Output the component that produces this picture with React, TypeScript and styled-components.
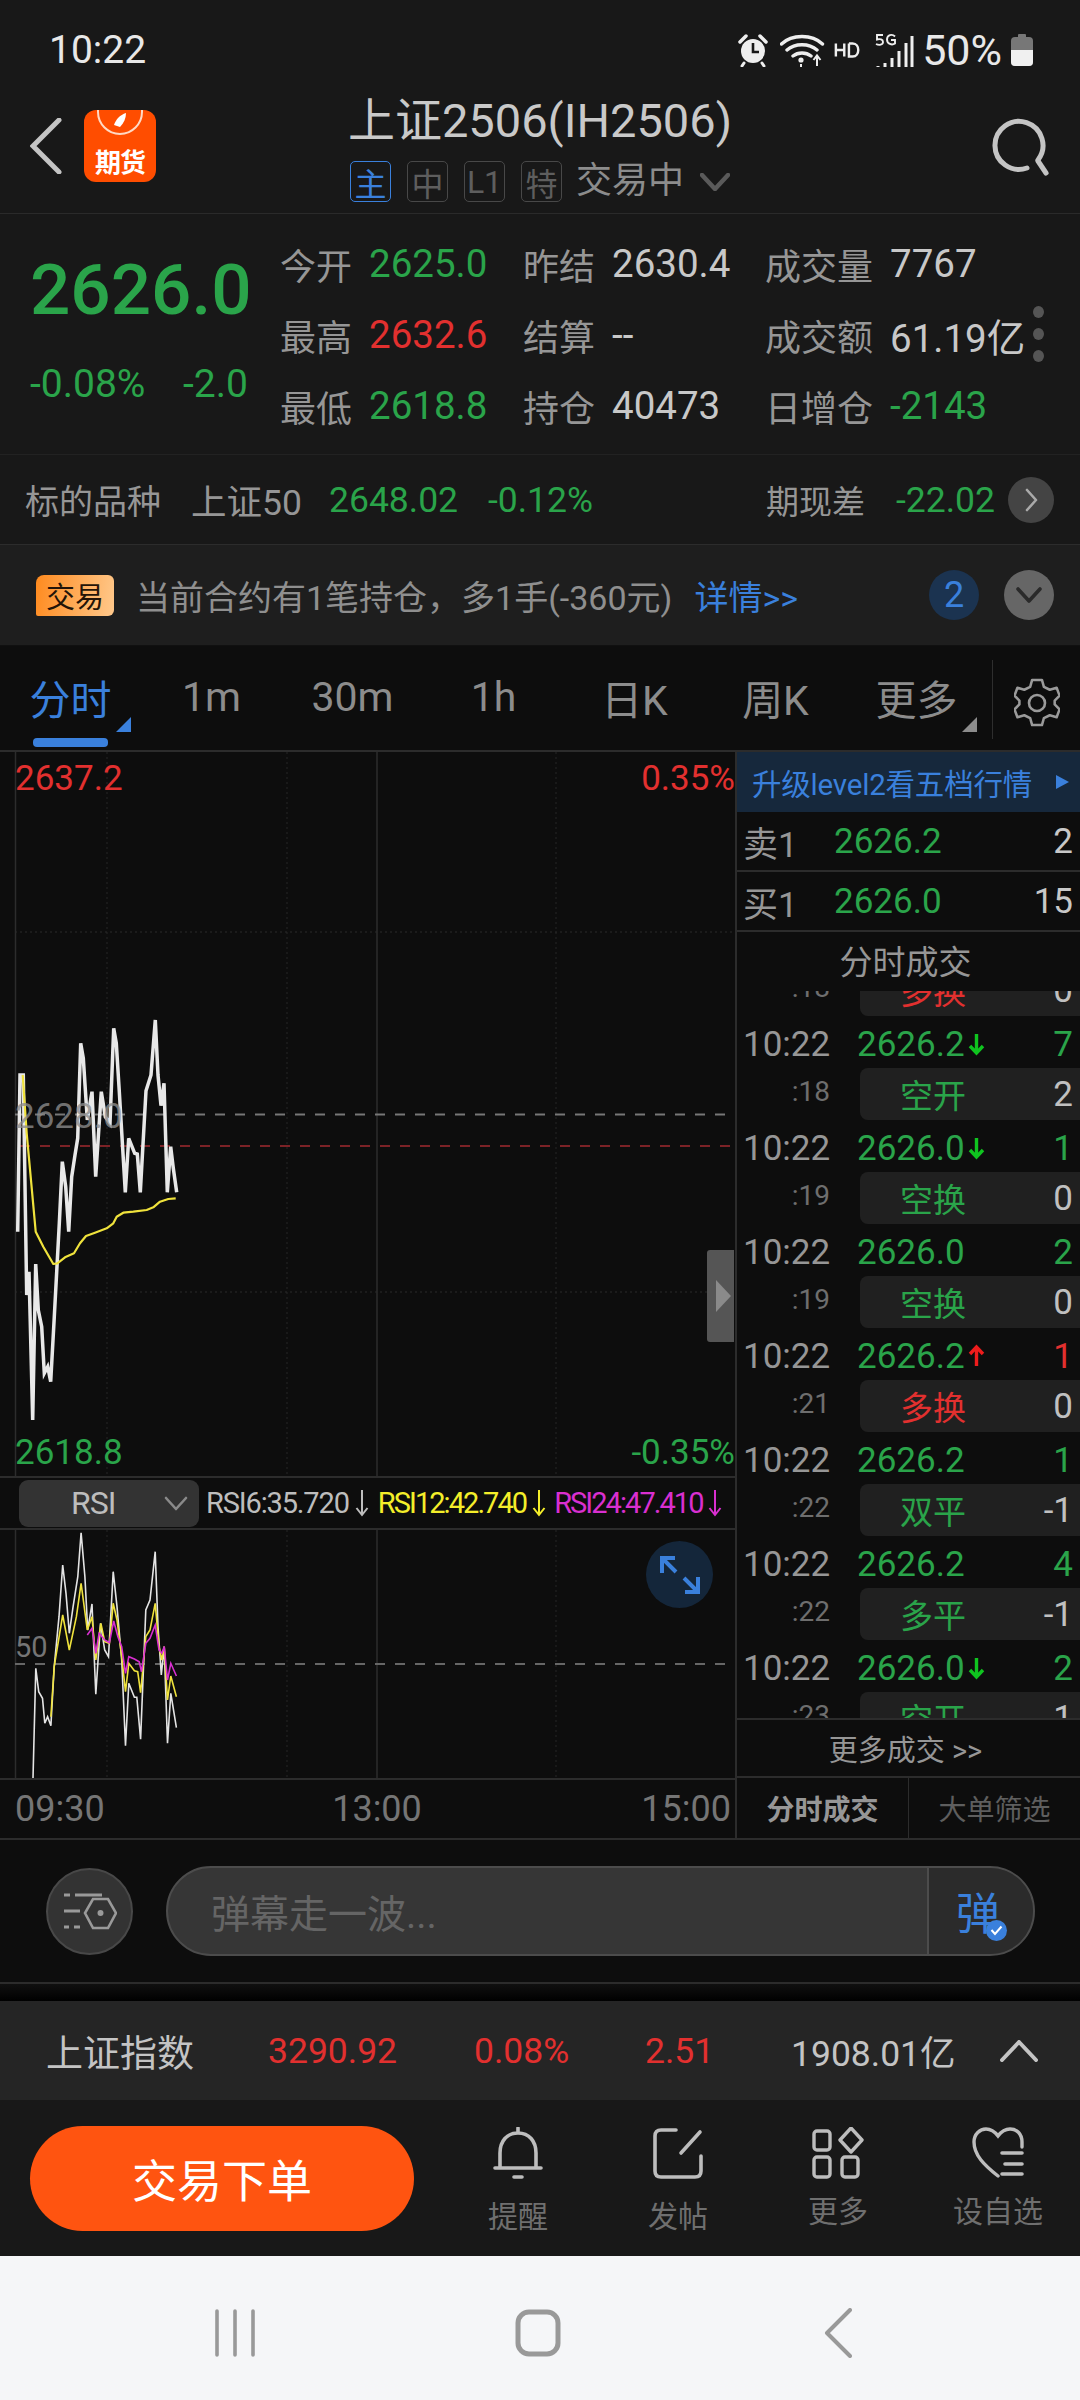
import React from 'react';
import styled, { createGlobalStyle } from 'styled-components';

const GREEN = '#2aa44a';
const RED = '#e2302f';
const BLUE = '#3a80dc';

const GlobalStyle = createGlobalStyle`
  html, body { margin: 0; padding: 0; background: #0d0d0d; }
  * { box-sizing: border-box; }
  body { font-family: Roboto, "Noto Sans CJK SC", sans-serif; }
`;

const Page = styled.div`
  width: 1080px;
  height: 2400px;
  display: flex;
  flex-direction: column;
  overflow: hidden;
  background: #0d0d0d;
  color: #c8c8c8;
`;

const StatusBar = styled.div`
  height: 85px;
  flex: none;
  display: flex;
  align-items: center;
  padding: 24px 47px 9px 49px;
  background: #181818;
  color: #e8e8e8;
`;

const Clock = styled.div`
  font-size: 39px;
  margin-right: auto;
`;

const StatusIcons = styled.div`
  display: flex;
  align-items: center;
`;

const BatteryText = styled.span`
  font-size: 43px;
  margin: 0 9px 0 8px;
`;

const Header = styled.div`
  height: 129px;
  flex: none;
  display: grid;
  grid-template-columns: 1fr auto 1fr;
  background: #181818;
  border-bottom: 1px solid #2a2a2a;
`;

const HeaderLeft = styled.div`
  display: flex;
  align-items: center;
  gap: 22px;
  padding: 0 0 6px 30px;
`;

const Logo = styled.div`
  position: relative;
  width: 72px;
  height: 72px;
  border-radius: 12px;
  background: #ff4d00;
  overflow: hidden;
  display: flex;
  align-items: flex-end;
  justify-content: center;
  color: #fff;
  font-size: 26px;
  font-weight: 700;
  line-height: 38px;
  letter-spacing: -1px;
`;

const LogoMark = styled.svg`
  position: absolute;
  top: 0;
  left: 12px;
`;

const HeaderCenter = styled.div`
  display: flex;
  flex-direction: column;
  align-items: center;
`;

const Title = styled.div`
  font-size: 47px;
  line-height: 56px;
  margin-top: 8px;
  color: #c9c9c9;
`;

const TagRow = styled.div`
  display: flex;
  align-items: center;
  gap: 16px;
  margin-top: 12px;
`;

const Tag = styled.span<{ $active?: boolean }>`
  width: 41px;
  height: 41px;
  display: flex;
  align-items: center;
  justify-content: center;
  border: 1.5px solid ${(p) => (p.$active ? BLUE : '#484848')};
  border-radius: 5px;
  font-size: 32px;
  color: ${(p) => (p.$active ? BLUE : '#5e5e5e')};
`;

const TradeState = styled.span`
  font-size: 36px;
  color: #8c8c8c;
  margin-left: -2px;
  line-height: 41px;
`;

const HeaderRight = styled.div`
  display: flex;
  align-items: center;
  justify-content: flex-end;
  padding: 0 29px 4px 0;
`;

const Quote = styled.div`
  position: relative;
  height: 241px;
  flex: none;
  display: flex;
  background: #181818;
  border-bottom: 1px solid #222;
  padding-top: 14px;
`;

const PriceCol = styled.div`
  width: 280px;
  flex: none;
  padding-left: 30px;
`;

const BigPrice = styled.div`
  font-size: 71px;
  font-weight: 500;
  line-height: 84px;
  margin-top: 20px;
  color: ${GREEN};
`;

const ChangeRow = styled.div`
  width: 218px;
  display: flex;
  justify-content: space-between;
  font-size: 39px;
  line-height: 44px;
  margin-top: 30px;
  color: ${GREEN};
`;

const QuoteGrid = styled.div`
  display: grid;
  grid-template-columns: 243px 242px 1fr;
  grid-auto-rows: 71px;
  flex: 1;
`;

const QuoteCell = styled.div`
  display: flex;
  align-items: center;
  gap: 17px;
`;

const QuoteLabel = styled.span`
  font-size: 36px;
  color: #969696;
`;

const QuoteValue = styled.span<{ $color?: string }>`
  font-size: 38.5px;
  color: ${(p) => p.$color || '#c8c8c8'};
  white-space: nowrap;
`;

const Dots = styled.div`
  position: absolute;
  top: 92px;
  left: 1033px;
  display: flex;
  flex-direction: column;
  gap: 10px;
`;

const Dot = styled.span`
  width: 11px;
  height: 12px;
  border-radius: 50%;
  background: #555;
`;

const Underlying = styled.div`
  height: 90px;
  flex: none;
  display: flex;
  align-items: center;
  background: #181818;
  border-bottom: 1px solid #2c2c2c;
  padding: 0 26px 0 25px;
`;

const UnderlyingText = styled.span<{ $color?: string; $w?: number; $size?: number }>`
  font-size: ${(p) => p.$size || 35.5}px;
  width: ${(p) => (p.$w ? `${p.$w}px` : 'auto')};
  flex: none;
  white-space: nowrap;
  color: ${(p) => p.$color || '#969696'};
`;

const RoundButton = styled.span<{ $bg: string; $size?: number }>`
  width: ${(p) => p.$size || 46}px;
  height: ${(p) => p.$size || 46}px;
  flex: none;
  border-radius: 50%;
  display: flex;
  align-items: center;
  justify-content: center;
  background: ${(p) => p.$bg};
`;

const TradeBar = styled.div`
  height: 101px;
  flex: none;
  display: flex;
  align-items: center;
  background: #1e1e1e;
  border-bottom: 1px solid #101010;
  padding: 0 26px 0 36px;
`;

const TradeBadge = styled.span`
  width: 78px;
  height: 41px;
  flex: none;
  display: flex;
  align-items: center;
  justify-content: center;
  border-radius: 8px 6px 6px 2px;
  background: linear-gradient(100deg, #ff8a1e, #ffc98c);
  color: #241408;
  font-size: 29px;
`;

const TradeText = styled.span`
  font-size: 34px;
  color: #8f8f8f;
  margin-left: 22px;
  white-space: nowrap;
`;

const TradeLink = styled.span`
  font-size: 34px;
  color: ${BLUE};
  margin-left: 22px;
  margin-right: auto;
`;

const CountCircle = styled(RoundButton)`
  color: ${BLUE};
  font-size: 36px;
  margin-right: 25px;
`;

const TabBar = styled.div`
  height: 106px;
  flex: none;
  display: flex;
  background: #0d0d0d;
  border-bottom: 2px solid #2c2c2c;
`;

const Tab = styled.div<{ $active?: boolean }>`
  position: relative;
  width: 141px;
  display: flex;
  align-items: center;
  justify-content: center;
  font-size: 41px;
  padding-bottom: 2px;
  color: ${(p) => (p.$active ? BLUE : '#8c8c8c')};
`;

const TabUnderline = styled.span`
  position: absolute;
  left: 33px;
  bottom: 3px;
  width: 75px;
  height: 9px;
  border-radius: 4px;
  background: ${BLUE};
`;

const TabCorner = styled.span<{ $color: string }>`
  position: absolute;
  right: 10px;
  top: 71px;
  width: 0;
  height: 0;
  border-left: 15px solid transparent;
  border-bottom: 15px solid ${(p) => p.$color};
`;

const GearCell = styled.div`
  flex: 1;
  display: flex;
  align-items: center;
  justify-content: flex-end;
  margin: 14px 0 11px 5px;
  padding: 6px 20px 0 0;
  border-left: 1px solid #2e2e2e;
`;

const Body = styled.div`
  height: 1088px;
  flex: none;
  display: flex;
  border-bottom: 2px solid #2c2c2c;
`;

const LeftPanel = styled.div`
  width: 735px;
  flex: none;
  display: flex;
  flex-direction: column;
`;

const ChartBox = styled.div<{ $h: number }>`
  position: relative;
  height: ${(p) => p.$h}px;
  flex: none;
`;

const ChartSvg = styled.svg`
  position: absolute;
  inset: 0;
  display: block;
`;

const ChartLabel = styled.span<{ $color: string; $top: number; $right?: boolean; $size?: number }>`
  position: absolute;
  top: ${(p) => p.$top}px;
  ${(p) => (p.$right ? 'right: 0;' : 'left: 15px;')}
  font-size: ${(p) => p.$size || 35}px;
  line-height: 40px;
  color: ${(p) => p.$color};
`;

const ChartHandle = styled.span`
  position: absolute;
  left: 707px;
  top: 498px;
  width: 27px;
  height: 92px;
  border-radius: 3px 0 0 3px;
  background: #555;
  display: flex;
  align-items: center;
  justify-content: flex-end;
  padding-right: 3px;
`;

const HandleArrow = styled.span`
  width: 0;
  height: 0;
  border-top: 16px solid transparent;
  border-bottom: 16px solid transparent;
  border-left: 15px solid #8a8a8a;
`;

const RsiHeader = styled.div`
  height: 54px;
  flex: none;
  display: flex;
  align-items: center;
  padding-left: 19px;
  border-top: 2px solid #2c2c2c;
  border-bottom: 2px solid #2c2c2c;
`;

const RsiSelect = styled.div`
  width: 180px;
  height: 47px;
  flex: none;
  display: flex;
  align-items: center;
  justify-content: space-between;
  padding: 0 11px 0 52px;
  border-radius: 9px;
  background: #333;
  font-size: 32px;
  color: #bdbdbd;
  letter-spacing: -1px;
`;

const RsiValue = styled.span<{ $color: string; $ml: number; $ls: number }>`
  margin-left: ${(p) => p.$ml}px;
  display: flex;
  align-items: center;
  font-size: 29px;
  letter-spacing: ${(p) => p.$ls}px;
  white-space: nowrap;
  color: ${(p) => p.$color};
`;

const ExpandButton = styled(RoundButton)`
  position: absolute;
  left: 646px;
  top: 11px;
`;

const TimeAxis = styled.div`
  flex: 1;
  display: grid;
  grid-template-columns: 300px 124px 1fr;
  align-items: center;
  padding: 0 4px 0 15px;
  border-top: 2px solid #2c2c2c;
  font-size: 36px;
  color: #757575;
`;

const AxisTick = styled.span<{ $align: string }>`
  text-align: ${(p) => p.$align};
`;

const RightPanel = styled.div`
  flex: 1;
  display: flex;
  flex-direction: column;
  border-left: 2px solid #2c2c2c;
  min-width: 0;
`;

const Level2 = styled.div`
  height: 60px;
  flex: none;
  display: flex;
  align-items: center;
  justify-content: space-between;
  padding: 0 11px 0 15px;
  background: #16283c;
  color: ${BLUE};
  font-size: 29.5px;
  letter-spacing: -0.2px;
`;

const Level2Arrow = styled.span`
  width: 0;
  height: 0;
  border-top: 7px solid transparent;
  border-bottom: 7px solid transparent;
  border-left: 13px solid ${BLUE};
`;

const BookRow = styled.div`
  height: 60px;
  flex: none;
  display: flex;
  align-items: center;
  padding: 0 7px 0 6px;
  font-size: 35px;
  border-bottom: 2px solid #2c2c2c;
`;

const BookLabel = styled.span`
  width: 91px;
  color: #969696;
`;

const BookPrice = styled.span`
  color: ${GREEN};
  margin-right: auto;
`;

const SectionTitle = styled.div`
  height: 59px;
  flex: none;
  display: flex;
  align-items: center;
  justify-content: center;
  padding: 0 6px 4px 0;
  font-size: 33px;
  color: #969696;
`;

const TickList = styled.div`
  flex: 1;
  min-height: 0;
  overflow: hidden;
`;

const TickScroll = styled.div`
  margin-top: -79px;
`;

const TickRow = styled.div`
  height: 104px;
  display: flex;
  flex-direction: column;
`;

const TickTop = styled.div`
  height: 52px;
  flex: none;
  display: flex;
  align-items: center;
  padding: 4px 7px 0 6px;
  font-size: 35px;
`;

const TickTime = styled.span`
  width: 114px;
  flex: none;
  color: #969696;
`;

const TickPrice = styled.span`
  color: ${GREEN};
`;

const TickArrow = styled.svg`
  margin-left: 3px;
`;

const TickQty = styled.span<{ $color: string }>`
  margin-left: auto;
  color: ${(p) => p.$color};
`;

const TickBottom = styled.div`
  height: 52px;
  flex: none;
  display: flex;
  align-items: center;
`;

const TickSeconds = styled.span`
  width: 93px;
  flex: none;
  text-align: right;
  font-size: 28px;
  padding-bottom: 5px;
  color: #6e6e6e;
`;

const TickPill = styled.div`
  flex: 1;
  height: 52px;
  margin-left: 30px;
  display: flex;
  align-items: center;
  padding: 0 7px 0 40px;
  border-radius: 8px 0 0 8px;
  background: #202020;
`;

const PillLabel = styled.span<{ $color: string }>`
  font-size: 33px;
  color: ${(p) => p.$color};
`;

const PillQty = styled.span`
  margin-left: auto;
  font-size: 35px;
  color: #c0c0c0;
`;

const MoreTicks = styled.div`
  height: 60px;
  flex: none;
  display: flex;
  align-items: center;
  justify-content: center;
  padding-right: 6px;
  border-top: 2px solid #2c2c2c;
  border-bottom: 2px solid #2c2c2c;
  font-size: 29px;
  color: #969696;
`;

const PanelTabs = styled.div`
  height: 60px;
  flex: none;
  display: flex;
`;

const PanelTab = styled.div<{ $active?: boolean }>`
  flex: 1;
  display: flex;
  align-items: center;
  justify-content: center;
  font-size: 28px;
  font-weight: ${(p) => (p.$active ? 700 : 400)};
  color: ${(p) => (p.$active ? '#969696' : '#5e5e5e')};
  & + & {
    border-left: 1px solid #2c2c2c;
  }
`;

const CommentBar = styled.div`
  height: 144px;
  flex: none;
  display: flex;
  align-items: center;
  gap: 33px;
  padding: 0 45px 0 46px;
  border-bottom: 2px solid #2c2c2c;
`;

const CommentInput = styled.div`
  flex: 1;
  height: 90px;
  display: flex;
  align-items: stretch;
  border-radius: 45px;
  border: 2px solid #4c4c4c;
  background: #363636;
  overflow: hidden;
`;

const Placeholder = styled.span`
  flex: 1;
  display: flex;
  align-items: center;
  padding-left: 43px;
  font-size: 39px;
  color: #656565;
`;

const SendBox = styled.div`
  position: relative;
  width: 106px;
  flex: none;
  display: flex;
  align-items: center;
  padding-left: 27px;
  border-left: 2px solid #4c4c4c;
  background: #2b2b2b;
  font-size: 44px;
  color: ${BLUE};
`;

const SendCheck = styled(RoundButton)`
  position: absolute;
  left: 57px;
  top: 52px;
`;

const FilterButton = styled(RoundButton)`
  border: 2px solid #484848;
`;

const FadeStrip = styled.div`
  height: 17px;
  flex: none;
  background: linear-gradient(#101010, #000);
`;

const IndexBar = styled.div`
  height: 99px;
  flex: none;
  display: flex;
  align-items: center;
  background: #252525;
  padding-left: 46px;
`;

const IndexText = styled.span<{ $color?: string; $x: number; $size?: number }>`
  width: ${(p) => p.$x}px;
  flex: none;
  white-space: nowrap;
  font-size: ${(p) => p.$size || 35.5}px;
  color: ${(p) => p.$color || '#c4c4c4'};
`;

const BottomBar = styled.div`
  height: 156px;
  flex: none;
  display: flex;
  align-items: center;
  background: #181818;
  padding: 0 0 0 30px;
`;

const OrderButton = styled.div`
  width: 384px;
  height: 105px;
  flex: none;
  display: flex;
  align-items: center;
  justify-content: center;
  border-radius: 53px;
  background: #ff5410;
  color: #fff;
  font-size: 45px;
`;

const ActionList = styled.div`
  flex: 1;
  align-self: flex-start;
  display: grid;
  grid-template-columns: repeat(4, 160px);
  align-items: start;
  padding: 27px 0 0 24px;
`;

const Action = styled.div<{ $lift?: boolean }>`
  display: flex;
  flex-direction: column;
  align-items: center;
  font-size: 30px;
  line-height: 36px;
  color: #6f6f6f;
  & > span {
    margin-top: ${(p) => (p.$lift ? 15 : 20)}px;
  }
`;

const NavBar = styled.div`
  flex: 1;
  display: flex;
  align-items: center;
  background: #f5f6f8;
  padding: 10px 0 0 215px;
  gap: 260px;
`;

const NavBack = styled.svg`
  margin-left: 3px;
`;

// reference points were read off the zoomed crops, so they get scaled back here
const scalePts = (raw: number[], sx: number, sy: number, oy: number) => {
  const out: string[] = [];
  for (let i = 0; i < raw.length; i += 2) {
    out.push(`${(raw[i] / sx).toFixed(1)},${(oy + raw[i + 1] / sy).toFixed(1)}`);
  }
  return out.join(' ');
};

const priceLine = [53,815,60,345,70,345,80,1005,87,935,98,1380,107,912,115,1050,125,1100,133,1240,143,1220,152,1265,163,1070,178,790,187,605,197,680,206,815,215,650,225,585,233,535,242,250,250,295,262,480,276,395,287,650,304,395,316,470,330,490,341,205,349,250,358,395,376,697,386,535,404,580,412,582,421,697,438,392,453,345,466,180,474,345,483,437,492,370,502,697,512,560,520,625,530,697];
const avgLine = [68,345,80,520,107,815,130,860,160,912,172,910,195,892,222,880,240,850,258,828,285,818,320,805,340,790,350,770,370,758,400,755,440,750,460,742,480,725,505,717,527,715];
const rsi6 = [70,955,76,625,82,695,90,715,95,790,101,770,108,797,115,620,125,470,133,315,140,400,147,520,155,440,165,350,172,218,180,350,186,510,195,432,203,703,213,490,222,570,230,590,240,335,248,440,258,600,266,857,273,670,285,712,290,712,298,838,309,450,318,420,329,275,335,500,342,645,348,560,355,850,362,700,374,803];
const rsi12 = [108,770,115,620,133,465,147,570,162,470,172,370,185,510,195,470,203,600,214,490,222,545,232,550,240,430,248,480,258,590,266,695,273,610,285,632,292,635,298,698,309,530,318,510,329,430,337,560,343,600,348,560,355,720,362,648,374,710];
const rsi24 = [185,525,195,505,203,580,210,520,222,540,232,548,241,483,250,530,258,560,266,640,273,590,285,597,295,605,300,635,309,550,318,535,329,495,337,570,343,580,348,560,355,660,362,610,374,648];

const quoteCells: { label: string; value: string; color?: string }[] = [
  { label: '今开', value: '2625.0', color: GREEN },
  { label: '昨结', value: '2630.4' },
  { label: '成交量', value: '7767' },
  { label: '最高', value: '2632.6', color: RED },
  { label: '结算', value: '--' },
  { label: '成交额', value: '61.19亿' },
  { label: '最低', value: '2618.8', color: GREEN },
  { label: '持仓', value: '40473' },
  { label: '日增仓', value: '-2143', color: GREEN },
];

const tabs = ['分时', '1m', '30m', '1h', '日K', '周K', '更多'];

type TickData = {
  sec: string;
  price: string;
  arrow?: 'up' | 'down';
  qty: string;
  qtyColor: string;
  kind: string;
  kindColor: string;
  delta: string;
};

const ticks: TickData[] = [
  { sec: ':18', price: '2626.2', qty: '1', qtyColor: RED, kind: '多换', kindColor: RED, delta: '0' },
  { sec: ':18', price: '2626.2', arrow: 'down', qty: '7', qtyColor: GREEN, kind: '空开', kindColor: GREEN, delta: '2' },
  { sec: ':19', price: '2626.0', arrow: 'down', qty: '1', qtyColor: GREEN, kind: '空换', kindColor: GREEN, delta: '0' },
  { sec: ':19', price: '2626.0', qty: '2', qtyColor: GREEN, kind: '空换', kindColor: GREEN, delta: '0' },
  { sec: ':21', price: '2626.2', arrow: 'up', qty: '1', qtyColor: RED, kind: '多换', kindColor: RED, delta: '0' },
  { sec: ':22', price: '2626.2', qty: '1', qtyColor: GREEN, kind: '双平', kindColor: GREEN, delta: '-1' },
  { sec: ':22', price: '2626.2', qty: '4', qtyColor: GREEN, kind: '多平', kindColor: GREEN, delta: '-1' },
  { sec: ':23', price: '2626.0', arrow: 'down', qty: '2', qtyColor: GREEN, kind: '空开', kindColor: GREEN, delta: '1' },
];

const Chevron: React.FC<{ dir: 'up' | 'down' | 'right'; color: string; w: number; h: number; sw?: number }> = ({ dir, color, w, h, sw = 4 }) => {
  const pts = {
    up: `2,${h - 2} ${w / 2},2 ${w - 2},${h - 2}`,
    down: `2,2 ${w / 2},${h - 2} ${w - 2},2`,
    right: `2,2 ${w - 2},${h / 2} 2,${h - 2}`,
  }[dir];
  return (
    <svg width={w} height={h} viewBox={`0 0 ${w} ${h}`}>
      <polyline points={pts} fill="none" stroke={color} strokeWidth={sw} strokeLinecap="round" strokeLinejoin="round" />
    </svg>
  );
};

const DownArrow: React.FC<{ color: string }> = ({ color }) => (
  <svg width="14" height="28" viewBox="0 0 14 28" style={{ marginLeft: 6 }}>
    <path d="M7 1V26M1.5 19L7 26L12.5 19" fill="none" stroke={color} strokeWidth="2" />
  </svg>
);

const MainChart: React.FC = () => (
  <ChartSvg width="735" height="724" viewBox="0 752 735 724">
    <line x1="15.5" y1="752" x2="15.5" y2="1476" stroke="#2c2c2c" strokeWidth="1.5" />
    <line x1="377" y1="752" x2="377" y2="1476" stroke="#2c2c2c" strokeWidth="1.5" />
    {[107, 287, 556].map((x) => (
      <line key={x} x1={x} y1="752" x2={x} y2="1476" stroke="#262626" strokeWidth="1" strokeDasharray="2 3" />
    ))}
    {[932, 1292].map((y) => (
      <line key={y} x1="15" y1={y} x2="735" y2={y} stroke="#2a2a2a" strokeWidth="1" strokeDasharray="2 3" />
    ))}
    <line x1="15" y1="1114.5" x2="735" y2="1114.5" stroke="#777" strokeWidth="2" strokeDasharray="10 10" />
    <line x1="20" y1="1146" x2="735" y2="1146" stroke="#7c2226" strokeWidth="2" strokeDasharray="10 10" />
    <polyline points={scalePts(priceLine, 3, 3, 960)} fill="none" stroke="#e8e8e8" strokeWidth="3.5" strokeLinejoin="miter" />
    <polyline points={scalePts(avgLine, 3, 3, 960)} fill="none" stroke="#efe23c" strokeWidth="2.2" strokeLinejoin="round" />
  </ChartSvg>
);

const RsiChart: React.FC = () => (
  <ChartSvg width="735" height="248" viewBox="0 1530 735 248">
    <line x1="15.5" y1="1530" x2="15.5" y2="1778" stroke="#2c2c2c" strokeWidth="1.5" />
    <line x1="377" y1="1530" x2="377" y2="1778" stroke="#2c2c2c" strokeWidth="1.5" />
    {[107, 287, 556].map((x) => (
      <line key={x} x1={x} y1="1530" x2={x} y2="1778" stroke="#262626" strokeWidth="1" strokeDasharray="2 3" />
    ))}
    <line x1="15" y1="1664" x2="728" y2="1664" stroke="#666" strokeWidth="2" strokeDasharray="10 10" />
    <polyline points={scalePts(rsi6, 2.12, 3, 1460)} fill="none" stroke="#e4e4e4" strokeWidth="1.6" />
    <polyline points={scalePts(rsi12, 2.12, 3, 1460)} fill="none" stroke="#efe23c" strokeWidth="1.6" />
    <polyline points={scalePts(rsi24, 2.12, 3, 1460)} fill="none" stroke="#d92fd0" strokeWidth="1.6" />
  </ChartSvg>
);

const StatusGlyphs: React.FC = () => (
  <StatusIcons>
    <svg width="32" height="34" viewBox="0 0 32 34">
      <circle cx="16" cy="18" r="12" fill="#eee" />
      <path d="M3 9L9 3M29 9L23 3" stroke="#eee" strokeWidth="3.5" strokeLinecap="round" />
      <path d="M7 30L5 33M25 30L27 33" stroke="#eee" strokeWidth="3" strokeLinecap="round" />
      <path d="M16 10V19H22" fill="none" stroke="#181818" strokeWidth="2.6" />
    </svg>
    <svg width="46" height="36" viewBox="0 0 46 36" style={{ marginLeft: 11 }}>
      <path d="M1.5 12C12 2 32 2 42.5 12M7 18C15 11 29 11 37 18M13 24C18 20 26 20 31 24" fill="none" stroke="#eee" strokeWidth="3.4" strokeLinecap="round" />
      <circle cx="21" cy="28" r="2.6" fill="#eee" />
      <path d="M21 32V35M37 34V24M33.5 28L37 23.5L40.5 28" fill="none" stroke="#eee" strokeWidth="2" />
    </svg>
    <svg width="28" height="18" viewBox="0 0 30 18" style={{ marginLeft: 8 }}>
      <path d="M2 2V16M11 2V16M2 9H11M16 2V16H20C28 16 28 2 20 2H16" fill="none" stroke="#eee" strokeWidth="2.6" />
    </svg>
    <svg width="40" height="34" viewBox="0 0 40 34" style={{ marginLeft: 12 }}>
      <path d="M9 2H3V6.5C6 5.5 9 6.5 9 9C9 12 5 12.5 2 11M21 3.5C18 0.5 13 2 13 6.5C13 11 18 12.5 21 10.5V7H17" fill="none" stroke="#eee" strokeWidth="1.9" />
      <path d="M11 30V34M18 25V34M25 18V34M32 10V34M38 3V34" stroke="#eee" strokeWidth="3" />
      <path d="M4 33V34" stroke="#eee" strokeWidth="3" />
    </svg>
    <BatteryText>50%</BatteryText>
    <svg width="22" height="32" viewBox="0 0 22 32">
      <rect x="7" y="0" width="8" height="4" rx="1" fill="#777" />
      <rect x="0" y="3" width="22" height="29" rx="4" fill="#777" />
      <path d="M0 16H22V28A4 4 0 0 1 18 32H4A4 4 0 0 1 0 28Z" fill="#f0f0f0" />
    </svg>
  </StatusIcons>
);

const App: React.FC = () => {
  return (
    <Page>
      <GlobalStyle />
      <StatusBar>
        <Clock>10:22</Clock>
        <StatusGlyphs />
      </StatusBar>

      <Header>
        <HeaderLeft>
          <svg width="32" height="56" viewBox="0 0 32 56">
            <polyline points="29,2 3,28 29,54" fill="none" stroke="#c4c4c4" strokeWidth="5" strokeLinecap="round" />
          </svg>
          <Logo>
            <LogoMark width="48" height="30" viewBox="0 0 48 30">
              <path d="M2 -4V2C2 14 12 24 24 24C36 24 46 14 46 2V-4" fill="none" stroke="#ffd9c4" strokeWidth="2" />
              <path d="M30 3C24 5 20 9 18 15L24 17C28 13 30 8 30 3Z" fill="#fff" />
            </LogoMark>
            期货
          </Logo>
        </HeaderLeft>
        <HeaderCenter>
          <Title>上证2506(IH2506)</Title>
          <TagRow>
            <Tag $active>主</Tag>
            <Tag>中</Tag>
            <Tag>L1</Tag>
            <Tag>特</Tag>
            <TradeState>交易中</TradeState>
            <Chevron dir="down" color="#5a5a5a" w={30} h={18} sw={4.5} />
          </TagRow>
        </HeaderCenter>
        <HeaderRight>
          <svg width="60" height="58" viewBox="0 0 60 58">
            <path d="M36 50A24 24 0 1 1 47 42" fill="none" stroke="#c4c4c4" strokeWidth="5" strokeLinecap="round" />
            <path d="M47 43L55 55" stroke="#c4c4c4" strokeWidth="5" strokeLinecap="round" />
          </svg>
        </HeaderRight>
      </Header>

      <Quote>
        <PriceCol>
          <BigPrice>2626.0</BigPrice>
          <ChangeRow>
            <span>-0.08%</span>
            <span>-2.0</span>
          </ChangeRow>
        </PriceCol>
        <QuoteGrid>
          {quoteCells.map((cell) => (
            <QuoteCell key={cell.label}>
              <QuoteLabel>{cell.label}</QuoteLabel>
              <QuoteValue $color={cell.color}>{cell.value}</QuoteValue>
            </QuoteCell>
          ))}
        </QuoteGrid>
        <Dots>
          <Dot />
          <Dot />
          <Dot />
        </Dots>
      </Quote>

      <Underlying>
        <UnderlyingText $w={166} $size={34}>标的品种</UnderlyingText>
        <UnderlyingText $w={138}>上证50</UnderlyingText>
        <UnderlyingText $w={159} $color={GREEN}>2648.02</UnderlyingText>
        <UnderlyingText $w={278} $color={GREEN}>-0.12%</UnderlyingText>
        <UnderlyingText $w={130} $size={33}>期现差</UnderlyingText>
        <UnderlyingText $w={112} $color={GREEN}>-22.02</UnderlyingText>
        <RoundButton $bg="#444">
          <Chevron dir="right" color="#aaa" w={13} h={24} sw={2.6} />
        </RoundButton>
      </Underlying>

      <TradeBar>
        <TradeBadge>交易</TradeBadge>
        <TradeText>当前合约有1笔持仓，多1手(-360元)</TradeText>
        <TradeLink>详情&gt;&gt;</TradeLink>
        <CountCircle $bg="#1b3350" $size={50}>2</CountCircle>
        <RoundButton $bg="#666" $size={50}>
          <Chevron dir="down" color="#2a2a2a" w={26} h={16} sw={3.6} />
        </RoundButton>
      </TradeBar>

      <TabBar>
        {tabs.map((label, i) => (
          <Tab key={label} $active={i === 0}>
            {label}
            {i === 0 && <TabUnderline />}
            {i === 0 && <TabCorner $color={BLUE} />}
            {i === 6 && <TabCorner $color="#8c8c8c" />}
          </Tab>
        ))}
        <GearCell>
          <svg width="46" height="50" viewBox="0 0 46 50">
            <path d="M18 2H28L30 9L36 12L43 10L46 18L41 23V27L46 32L43 40L36 38L30 41L28 48H18L16 41L10 38L3 40L0 32L5 27V23L0 18L3 10L10 12L16 9Z" transform="translate(0.5 0) scale(0.98)" fill="none" stroke="#9a9a9a" strokeWidth="2.6" strokeLinejoin="round" />
            <circle cx="23" cy="25" r="8" fill="none" stroke="#9a9a9a" strokeWidth="2.6" />
          </svg>
        </GearCell>
      </TabBar>

      <Body>
        <LeftPanel>
          <ChartBox $h={724}>
            <MainChart />
            <ChartLabel $color={RED} $top={7}>2637.2</ChartLabel>
            <ChartLabel $color={RED} $top={7} $right>0.35%</ChartLabel>
            <ChartLabel $color="rgba(140,140,140,0.8)" $top={345}>2628.0</ChartLabel>
            <ChartLabel $color={GREEN} $top={681}>2618.8</ChartLabel>
            <ChartLabel $color={GREEN} $top={681} $right>-0.35%</ChartLabel>
            <ChartHandle>
              <HandleArrow />
            </ChartHandle>
          </ChartBox>
          <RsiHeader>
            <RsiSelect>
              RSI
              <Chevron dir="down" color="#8a8a8a" w={24} h={15} sw={2.6} />
            </RsiSelect>
            <RsiValue $color="#bdbdbd" $ml={7} $ls={-1.15}>RSI6:35.720<DownArrow color="#bdbdbd" /></RsiValue>
            <RsiValue $color="#f4ee2a" $ml={9} $ls={-1.95}>RSI12:42.740<DownArrow color="#f4ee2a" /></RsiValue>
            <RsiValue $color="#d92fd0" $ml={8} $ls={-1.95}>RSI24:47.410<DownArrow color="#d92fd0" /></RsiValue>
          </RsiHeader>
          <ChartBox $h={248}>
            <RsiChart />
            <ChartLabel $color="#757575" $top={97} $size={29}>50</ChartLabel>
            <ExpandButton $bg="#14263a" $size={67}>
              <svg width="44" height="44" viewBox="0 0 44 44">
                <path d="M4 20V5H17M5 6L18 19M40 24V39H27M39 38L26 25" fill="none" stroke={BLUE} strokeWidth="4" />
              </svg>
            </ExpandButton>
          </ChartBox>
          <TimeAxis>
            <AxisTick $align="left">09:30</AxisTick>
            <AxisTick $align="center">13:00</AxisTick>
            <AxisTick $align="right">15:00</AxisTick>
          </TimeAxis>
        </LeftPanel>

        <RightPanel>
          <Level2>
            升级level2看五档行情
            <Level2Arrow />
          </Level2>
          <BookRow>
            <BookLabel>卖1</BookLabel>
            <BookPrice>2626.2</BookPrice>
            <span>2</span>
          </BookRow>
          <BookRow>
            <BookLabel>买1</BookLabel>
            <BookPrice>2626.0</BookPrice>
            <span>15</span>
          </BookRow>
          <SectionTitle>分时成交</SectionTitle>
          <TickList>
            <TickScroll>
              {ticks.map((t, i) => (
                <TickRow key={i}>
                  <TickTop>
                    <TickTime>10:22</TickTime>
                    <TickPrice>{t.price}</TickPrice>
                    {t.arrow && (
                      <TickArrow width="17" height="24" viewBox="0 0 17 24">
                        <path
                          d={t.arrow === 'down' ? 'M8.5 2V21M2 14L8.5 21L15 14' : 'M8.5 22V3M2 10L8.5 3L15 10'}
                          fill="none"
                          stroke={t.arrow === 'down' ? '#0fc41f' : '#ee1c1c'}
                          strokeWidth="3.4"
                        />
                      </TickArrow>
                    )}
                    <TickQty $color={t.qtyColor}>{t.qty}</TickQty>
                  </TickTop>
                  <TickBottom>
                    <TickSeconds>{t.sec}</TickSeconds>
                    <TickPill>
                      <PillLabel $color={t.kindColor}>{t.kind}</PillLabel>
                      <PillQty>{t.delta}</PillQty>
                    </TickPill>
                  </TickBottom>
                </TickRow>
              ))}
            </TickScroll>
          </TickList>
          <MoreTicks>更多成交 &gt;&gt;</MoreTicks>
          <PanelTabs>
            <PanelTab $active>分时成交</PanelTab>
            <PanelTab>大单筛选</PanelTab>
          </PanelTabs>
        </RightPanel>
      </Body>

      <CommentBar>
        <FilterButton $bg="#333" $size={87}>
          <svg width="54" height="40" viewBox="0 0 54 40">
            <path d="M1 4H7M12 4H39M1 20H17M1 36H6M11 36H17" fill="none" stroke="#9a9a9a" strokeWidth="3" />
            <path d="M30 8H45L53 22L45 37H30L22 22Z" fill="none" stroke="#9a9a9a" strokeWidth="2.6" />
            <circle cx="37.5" cy="22" r="3" fill="#9a9a9a" />
          </svg>
        </FilterButton>
        <CommentInput>
          <Placeholder>弹幕走一波...</Placeholder>
          <SendBox>
            弹
            <SendCheck $bg={BLUE} $size={21}>
              <svg width="13" height="11" viewBox="0 0 13 11">
                <polyline points="1.5,5 5,9 11.5,1.5" fill="none" stroke="#fff" strokeWidth="2" />
              </svg>
            </SendCheck>
          </SendBox>
        </CommentInput>
      </CommentBar>
      <FadeStrip />

      <IndexBar>
        <IndexText $x={222} $size={37}>上证指数</IndexText>
        <IndexText $x={206} $color={RED}>3290.92</IndexText>
        <IndexText $x={171} $color={RED}>0.08%</IndexText>
        <IndexText $x={146} $color={RED}>2.51</IndexText>
        <IndexText $x={209}>1908.01亿</IndexText>
        <Chevron dir="up" color="#c4c4c4" w={38} h={22} sw={4} />
      </IndexBar>

      <BottomBar>
        <OrderButton>交易下单</OrderButton>
        <ActionList>
          <Action>
            <svg width="50" height="52" viewBox="0 0 50 52">
              <path d="M25 1V6M7 40V26C7 14 14 6 25 6C36 6 43 14 43 26V40M2 41H48M21 50H29" fill="none" stroke="#bdbdbd" strokeWidth="3.6" strokeLinecap="round" />
            </svg>
            <span>提醒</span>
          </Action>
          <Action>
            <svg width="50" height="52" viewBox="0 0 50 52">
              <path d="M23 3H8C4 3 2 5 2 9V44C2 48 4 50 8 50H42C46 50 48 48 48 44V29M47 5L28 26" fill="none" stroke="#bdbdbd" strokeWidth="3.6" strokeLinecap="round" />
            </svg>
            <span>发帖</span>
          </Action>
          <Action $lift>
            <svg width="52" height="52" viewBox="0 0 52 52">
              <rect x="2" y="4" width="16" height="19" rx="3" fill="none" stroke="#bdbdbd" strokeWidth="3.4" />
              <path d="M39 1L50 13L39 25L28 13Z" fill="none" stroke="#bdbdbd" strokeWidth="3.4" strokeLinejoin="round" />
              <rect x="2" y="30" width="16" height="20" rx="3" fill="none" stroke="#bdbdbd" strokeWidth="3.4" />
              <rect x="30" y="30" width="16" height="20" rx="3" fill="none" stroke="#bdbdbd" strokeWidth="3.4" />
            </svg>
            <span>更多</span>
          </Action>
          <Action $lift>
            <svg width="52" height="52" viewBox="0 0 52 52">
              <path d="M26 49C12 38 2 28 2 15C2 7 8 2 14 2C19 2 23 5 26 9C29 5 33 2 38 2C45 2 50 7 50 15V20" fill="none" stroke="#bdbdbd" strokeWidth="3.4" strokeLinecap="round" />
              <path d="M30 26H50M33 37H50M30 47H50" stroke="#bdbdbd" strokeWidth="3.6" strokeLinecap="round" />
            </svg>
            <span>设自选</span>
          </Action>
        </ActionList>
      </BottomBar>

      <NavBar>
        <svg width="40" height="48" viewBox="0 0 40 48">
          <path d="M2 2V46M20 2V46M38 2V46" stroke="#999" strokeWidth="3.6" strokeLinecap="round" />
        </svg>
        <svg width="46" height="48" viewBox="0 0 46 48">
          <rect x="3" y="3" width="40" height="42" rx="11" fill="none" stroke="#999" strokeWidth="5" />
        </svg>
        <NavBack width="28" height="50" viewBox="0 0 28 50">
          <polyline points="26,2 3,25 26,48" fill="none" stroke="#999" strokeWidth="4" strokeLinecap="round" strokeLinejoin="round" />
        </NavBack>
      </NavBar>
    </Page>
  );
};

export default App;
